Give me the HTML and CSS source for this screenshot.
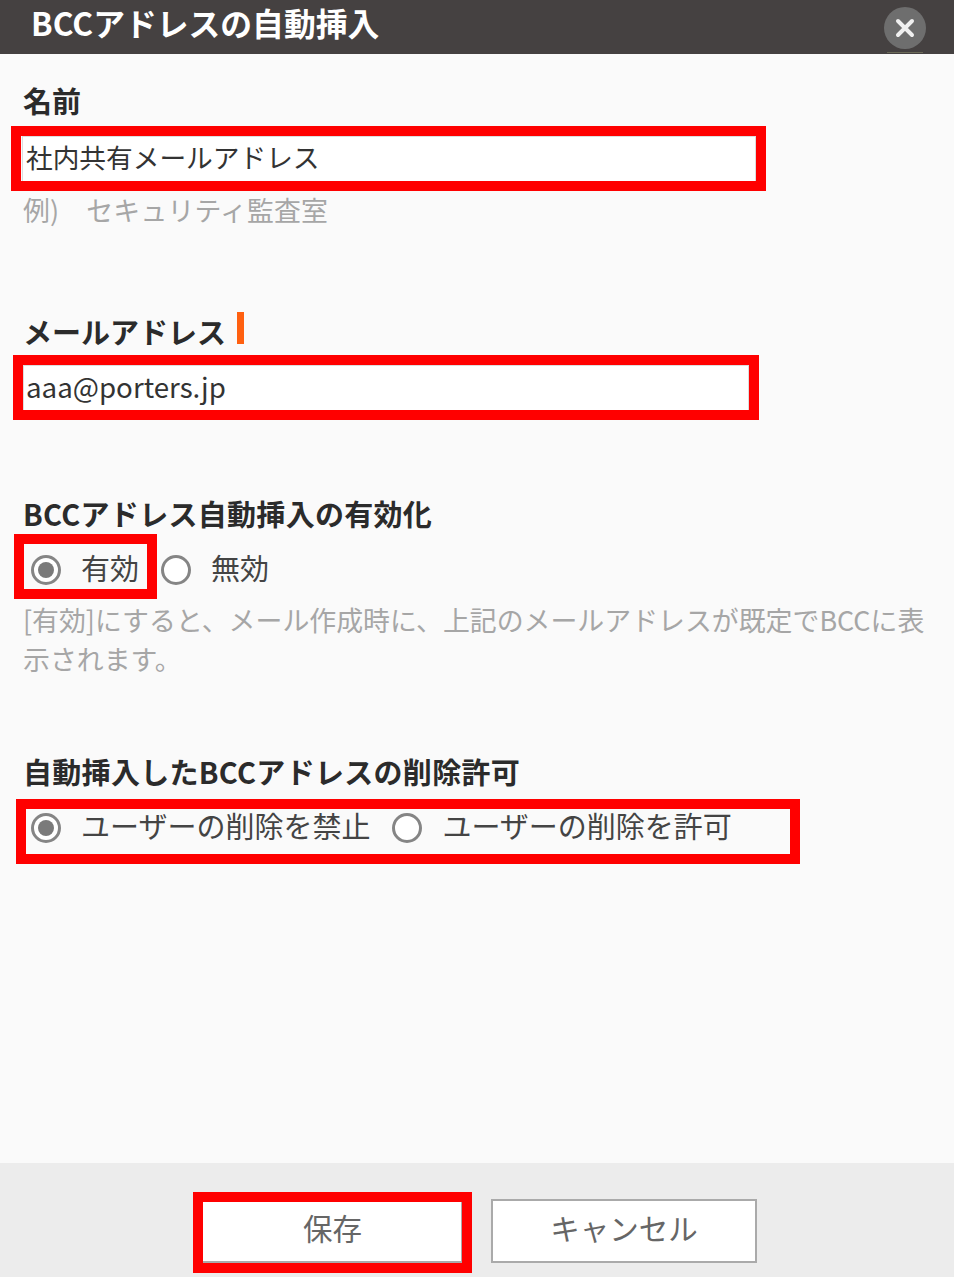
FILE: index.html
```html
<!DOCTYPE html>
<html lang="ja">
<head>
    <meta charset="UTF-8">
    <title>BCCアドレスの自動挿入</title>
    <link rel="stylesheet" href="styles.css">
</head>
<body>

    <div class="dialog">
        <div class="dialog-header">
            <h1>BCCアドレスの自動挿入</h1>
            <button class="close-btn" type="button" aria-label="閉じる">
                <svg width="22" height="22" viewBox="0 0 22 22"><path d="M4 4 L18 18 M18 4 L4 18" stroke="#f0f0f0" stroke-width="4" stroke-linecap="round"/></svg>
            </button>
        </div>

        <div class="dialog-body">
            <section class="field field-name">
                <label class="field-label">名前</label>
                <div class="text-input">社内共有メールアドレス</div>
                <p class="hint">例)　セキュリティ監査室</p>
            </section>

            <section class="field field-mail">
                <label class="field-label">メールアドレス<span class="required"></span></label>
                <div class="text-input">aaa@porters.jp</div>
            </section>

            <section class="field field-enable">
                <label class="field-label">BCCアドレス自動挿入の有効化</label>
                <div class="radio-row">
                    <span class="radio checked"></span><span class="radio-text">有効</span>
                    <span class="radio"></span><span class="radio-text">無効</span>
                </div>
                <p class="hint">[有効]にすると、メール作成時に、上記のメールアドレスが既定でBCCに表示されます。</p>
            </section>

            <section class="field field-delete">
                <label class="field-label">自動挿入したBCCアドレスの削除許可</label>
                <div class="radio-row">
                    <span class="radio checked"></span><span class="radio-text">ユーザーの削除を禁止</span>
                    <span class="radio"></span><span class="radio-text">ユーザーの削除を許可</span>
                </div>
            </section>
        </div>

        <div class="dialog-footer">
            <button class="btn btn-save" type="button">保存</button>
            <button class="btn btn-cancel" type="button">キャンセル</button>
        </div>

        <!-- red annotation frames drawn over the screenshot -->
        <div class="mark mark-name"></div>
        <div class="mark mark-mail"></div>
        <div class="mark mark-enable"></div>
        <div class="mark mark-delete"></div>
        <div class="mark mark-save"></div>
    </div>

</body>
</html>
```

FILE: styles.css
```css
/* Basic page */
body {
    margin: 0;
    background-color: #fafafa;
    font-family: "Noto Sans CJK JP", "Noto Sans", sans-serif;
    color: #333;
}

.dialog {
    position: relative;
    display: flex;
    flex-direction: column;
    height: 1277px;
    overflow: hidden;
}

/* Header */
.dialog-header {
    display: flex;
    justify-content: space-between;
    align-items: center;
    height: 54px;
    box-sizing: border-box;
    padding: 0 28px 0 31px;
    background-color: #454141;
}

.dialog-header h1 {
    margin: -10px 0 0;
    font-size: 31.8px;
    line-height: 44px;
    font-weight: 700;
    color: #fff;
}

.close-btn {
    position: relative;
    display: flex;
    justify-content: center;
    align-items: center;
    width: 42px;
    height: 42px;
    margin-top: 1px;
    padding: 0;
    border: none;
    border-radius: 50%;
    background-color: #6e6e6e;
}

/* thin line under the close button */
.close-btn::after {
    content: "";
    position: absolute;
    left: 3px;
    right: 3px;
    bottom: -4px;
    height: 1px;
    background-color: #6b6a58;
}

/* Form */
.dialog-body {
    flex: 1;
    padding: 0 24px;
}

.field-label {
    display: block;
    margin-left: -1px;
    font-size: 29px;
    line-height: 40px;
    font-weight: 700;
    color: #2b2b2b;
}

.field-enable .field-label,
.field-delete .field-label {
    letter-spacing: 0.3px;
}

.field-name { padding-top: 26px; }
.field-mail { padding-top: 82px; }
.field-enable { padding-top: 82px; }
.field-delete { padding-top: 73px; }

.required {
    display: inline-block;
    width: 7px;
    height: 32px;
    margin-left: 11px;
    vertical-align: 0;
    background-color: #ff6010;
}

.text-input {
    box-sizing: border-box;
    height: 46px;
    margin-top: 14px;
    padding-left: 3px;
    background-color: #fff;
    border: 1px solid #ddd;
    line-height: 40px;
    color: #333;
}

.field-name .text-input {
    width: 734px;
    margin-top: 16px;
    margin-left: -2px;
    font-size: 26.7px;
}

.field-mail .text-input {
    width: 726px;
    margin-left: -1px;
    padding-left: 2px;
    font-size: 27.7px;
}

.hint {
    margin: 6px 0 0;
    margin-left: -1px;
    font-size: 26.9px;
    line-height: 39px;
    color: #a6a6a6;
}

.field-name .hint {
    margin-top: 8px;
    letter-spacing: 0.15px;
}

.radio-row {
    display: flex;
    align-items: center;
    height: 48px;
    margin-top: 13px;
    padding-left: 7px;
    font-size: 29px;
    color: #444;
}

.radio {
    box-sizing: border-box;
    width: 30px;
    height: 30px;
    border: 3px solid #858585;
    border-radius: 50%;
    background-color: #fff;
    position: relative;
}

.radio.checked::after {
    content: "";
    position: absolute;
    top: 4px;
    left: 4px;
    width: 16px;
    height: 16px;
    border-radius: 50%;
    background-color: #7a7a7a;
}

.radio-text {
    margin-left: 20px;
    margin-right: 22px;
    margin-top: -6px;
}

/* Footer */
.dialog-footer {
    display: flex;
    justify-content: center;
    gap: 28px;
    height: 114px;
    box-sizing: border-box;
    padding-top: 36px;
    background-color: #ececec;
}

.btn {
    box-sizing: border-box;
    width: 266px;
    height: 64px;
    padding: 0 0 8px;
    background-color: #fff;
    border: 2px solid #aaa;
    font-family: inherit;
    font-size: 29.5px;
    color: #666;
}

.btn-save { padding-left: 5px; }

/* Annotation frames */
.mark {
    position: absolute;
    box-sizing: border-box;
    border: 10px solid #f00;
}

.mark-name { left: 11px; top: 126px; width: 755px; height: 65px; }
.mark-mail { left: 13px; top: 355px; width: 746px; height: 65px; }
.mark-enable { left: 14px; top: 534px; width: 143px; height: 65px; }
.mark-delete { left: 16px; top: 799px; width: 784px; height: 65px; }
.mark-save { left: 193px; top: 1192px; width: 279px; height: 81px; }
```
